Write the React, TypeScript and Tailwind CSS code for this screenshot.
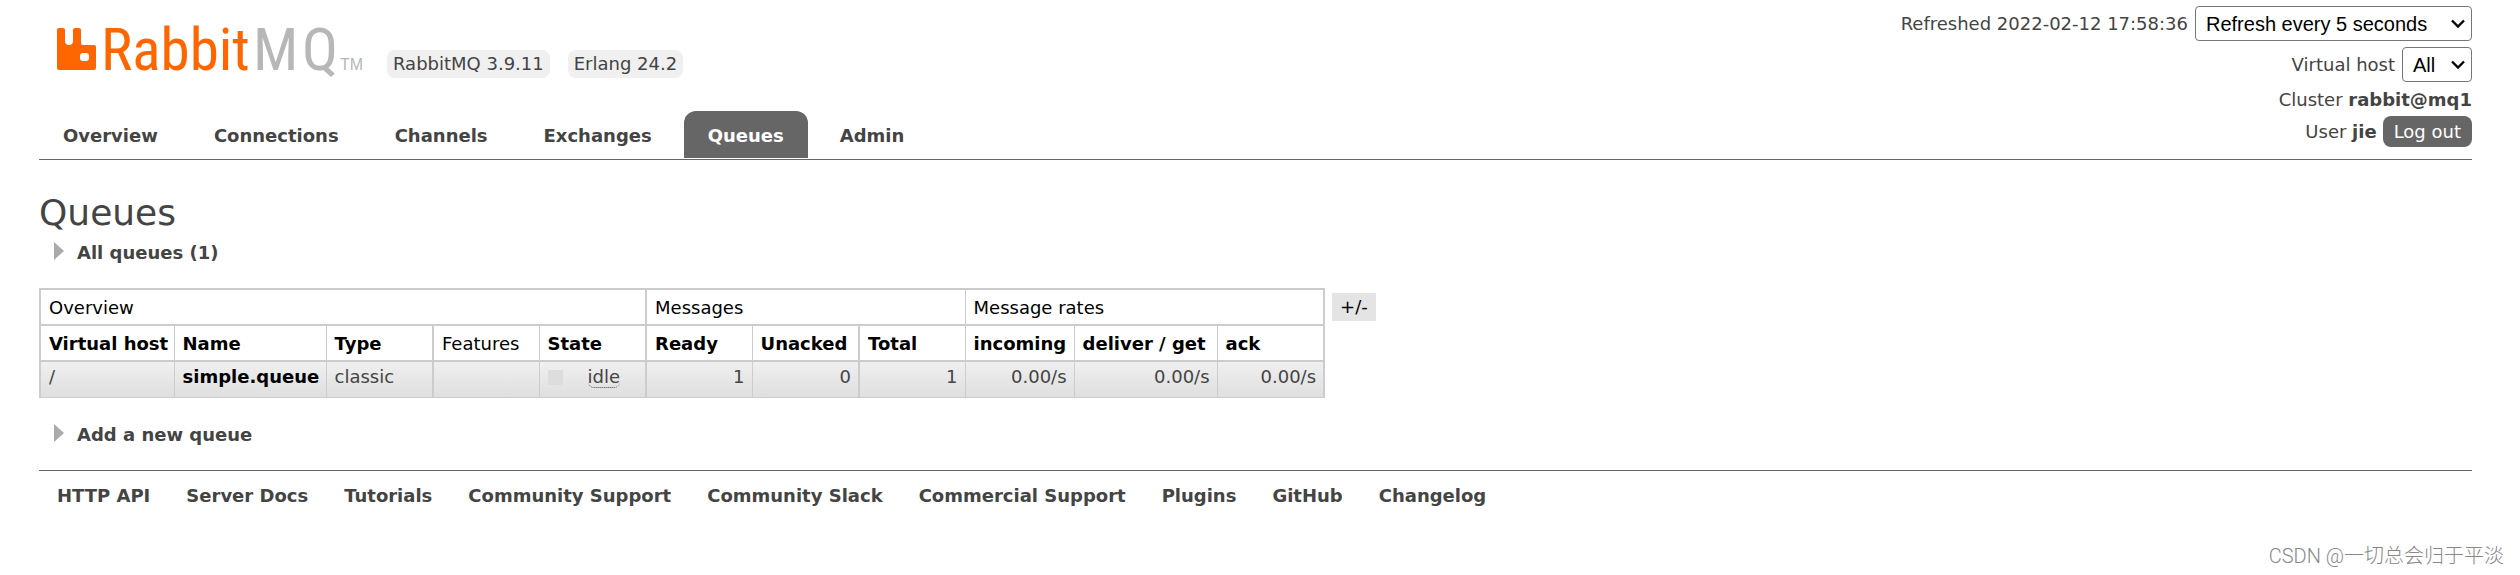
import { useState, type ReactNode } from 'react';
import clsx from 'clsx';

interface Column {
  label: string;
  width: string;
  edge: string;
  sortable?: boolean;
  numeric?: boolean;
}

const TABS = ['Overview', 'Connections', 'Channels', 'Exchanges', 'Queues', 'Admin'];

const COLUMNS: Column[] = [
  { label: 'Virtual host', width: 'w-[134px]', edge: 'border-l-2', sortable: true },
  { label: 'Name', width: 'w-[152px]', edge: 'border-l', sortable: true },
  { label: 'Type', width: 'w-[107px]', edge: 'border-l', sortable: true },
  { label: 'Features', width: 'w-[106px]', edge: 'border-l-2' },
  { label: 'State', width: 'w-[107px]', edge: 'border-l', sortable: true },
  { label: 'Ready', width: 'w-[106px]', edge: 'border-l-2', sortable: true, numeric: true },
  { label: 'Unacked', width: 'w-[107px]', edge: 'border-l', sortable: true, numeric: true },
  { label: 'Total', width: 'w-[106px]', edge: 'border-l-2', sortable: true, numeric: true },
  { label: 'incoming', width: 'w-[109px]', edge: 'border-l', sortable: true, numeric: true },
  { label: 'deliver / get', width: 'w-[143px]', edge: 'border-l', sortable: true, numeric: true },
  { label: 'ack', width: 'w-[107px]', edge: 'border-l border-r-2', sortable: true, numeric: true },
];

const FOOTER_LINKS = [
  'HTTP API',
  'Server Docs',
  'Tutorials',
  'Community Support',
  'Community Slack',
  'Commercial Support',
  'Plugins',
  'GitHub',
  'Changelog',
];

function Logo() {
  return (
    <svg width="310" height="84" viewBox="0 0 310 84" role="img" aria-label="RabbitMQ">
      <path
        fill="#ff6600"
        fillRule="evenodd"
        d="M2 22h4q2 0 2 2v11q0 4 4 4q4 0 4-4V24q0-2 2-2h4q2 0 2 2v13q0 2 2 2h11q2 0 2 2v21q0 2-2 2H2q-2 0-2-2V24q0-2 2-2zM26 47q-3 0-3 3v2q0 3 3 3h3q3 0 3-3v-2q0-3-3-3z"
      />
      <g fontFamily="'Roboto Condensed', 'Liberation Sans Narrow', 'Liberation Sans', sans-serif" fontSize="59">
        <text x="44" y="64" fill="#ff6600">Rabbit</text>
        <text x="196" y="64" fill="#b7b7b7" fontSize="60">
          M<tspan x="245">Q</tspan>
        </text>
      </g>
      <text x="283" y="64" fill="#b7b7b7" fontFamily="'Liberation Sans', sans-serif" fontSize="16">TM</text>
    </svg>
  );
}

function Select({ id, value, onChange, options, width }: {
  id: string;
  value: string;
  onChange: (v: string) => void;
  options: string[];
  width: string;
}) {
  return (
    <span className={clsx('relative inline-flex', width)}>
      <select
        id={id}
        value={value}
        onChange={(e) => onChange(e.target.value)}
        className="h-[35px] w-full appearance-none rounded-[4px] border border-[#767676] bg-white pl-[10px] font-['Liberation_Sans',sans-serif] text-[20px] leading-6 text-black"
      >
        {options.map((o) => <option key={o}>{o}</option>)}
      </select>
      <svg className="pointer-events-none absolute right-[7px] top-[13px]" width="14" height="9" viewBox="0 0 14 9" fill="none">
        <path d="M1 1.5l6 6 6-6" stroke="#000" strokeWidth="2.4" />
      </svg>
    </span>
  );
}

function Section({ children }: { children: ReactNode }) {
  return (
    <h2>
      <button type="button" className="flex items-center gap-[13px] pl-[15px] font-bold leading-6">
        <svg width="10" height="18" viewBox="0 0 10 18" className="mb-1">
          <path d="M0 0l10 9-10 9z" fill="#aaa" />
        </svg>
        {children}
      </button>
    </h2>
  );
}

export default function App() {
  const [tab, setTab] = useState('Queues');
  const [interval, setRefreshInterval] = useState('Refresh every 5 seconds');
  const [vhost, setVhost] = useState('All');

  const cells: ReactNode[] = [
    '/',
    <a href="#simple.queue" className="font-bold text-black">simple.queue</a>,
    'classic',
    '',
    <span className="flex items-center gap-[25px]">
      <span className="size-[15px] bg-[#ddd]" />
      <span className="rounded-[6px] border-b border-dotted border-[#444] leading-5">idle</span>
    </span>,
    '1',
    '0',
    '1',
    '0.00/s',
    '0.00/s',
    '0.00/s',
  ];

  return (
    <div className="relative bg-white pb-[66px] font-[Verdana,'DejaVu_Sans',sans-serif] text-[18px] leading-6 text-[#444]">
      <header className="ml-[39px] mr-12 flex items-stretch justify-between border-b border-[#666] pb-px">
        <div className="flex flex-col justify-between">
          <div className="flex items-start pl-[18px] pt-[6px]">
            <a href="#/"><Logo /></a>
            <ul className="ml-5 mt-11 flex gap-[18px]">
              <li className="rounded-[8px] bg-[#f0f0f0] px-[6px] py-[2px]">RabbitMQ 3.9.11</li>
              <li className="rounded-[8px] bg-[#f0f0f0] px-[6px] py-[2px]">Erlang 24.2</li>
            </ul>
          </div>
          <nav className="flex gap-2">
            {TABS.map((t) => (
              <a
                key={t}
                href={`#/${t.toLowerCase()}`}
                onClick={() => setTab(t)}
                className={clsx('rounded-t-[12px] px-6 pb-[10px] pt-[13px] font-bold', t === tab && 'bg-[#666] text-white')}
              >
                {t}
              </a>
            ))}
          </nav>
        </div>

        <ul className="flex flex-col items-end pt-[6px]">
          <li className="mb-[6px] flex items-center gap-[7px]">
            <label htmlFor="refresh">Refreshed 2022-02-12 17:58:36</label>
            <Select
              id="refresh"
              width="w-[277px]"
              value={interval}
              onChange={setRefreshInterval}
              options={['Refresh every 5 seconds', 'Refresh every 10 seconds', 'Refresh every 30 seconds', 'Do not refresh']}
            />
          </li>
          <li className="mb-[6px] flex items-center gap-[7px]">
            <label htmlFor="vhost">Virtual host</label>
            <Select id="vhost" width="w-[70px]" value={vhost} onChange={setVhost} options={['All', '/']} />
          </li>
          <li className="mb-1">Cluster <b>rabbit@mq1</b></li>
          <li className="mb-[11px] flex items-center gap-[6px]">
            <span>User <b>jie</b></span>
            <button type="button" className="h-[31px] rounded-[8px] bg-[#666] px-[11px] text-white">Log out</button>
          </li>
        </ul>
      </header>

      <main className="pl-[39px] pr-12 pt-[31px]">
        <h1 className="text-[36px] leading-[44px]">Queues</h1>
        <div className="mt-[6px]">
          <Section>All queues (1)</Section>
        </div>

        <div className="mt-[23px] flex items-start gap-[7px]">
          <table className="w-[1285px] table-fixed border-collapse text-left">
            <colgroup>
              {COLUMNS.map((c) => <col key={c.label} className={c.width} />)}
            </colgroup>
            <thead className="text-black">
              <tr className="h-9">
                <th colSpan={5} className="border-2 border-[#ccc] pb-0 pl-2 pr-[7px] pt-[2px] font-normal">Overview</th>
                <th colSpan={3} className="border-y-2 border-[#ccc] pb-0 pl-2 pr-[7px] pt-[2px] font-normal">Messages</th>
                <th colSpan={3} className="border-y-2 border-l border-r-2 border-[#ccc] pb-0 pl-2 pr-[7px] pt-[2px] font-normal">Message rates</th>
              </tr>
              <tr className="h-9">
                {COLUMNS.map((c) => (
                  <th
                    key={c.label}
                    className={clsx('whitespace-nowrap border-b-2 border-[#ccc] pb-0 pl-2 pr-[7px] pt-[2px]', c.edge, c.sortable ? 'font-bold' : 'font-normal')}
                  >
                    {c.label}
                  </th>
                ))}
              </tr>
            </thead>
            <tbody>
              <tr className="h-9 bg-linear-to-b from-[#f0f0f0] to-[#dfdfdf]">
                {COLUMNS.map((c, i) => (
                  <td
                    key={c.label}
                    className={clsx('whitespace-nowrap border-b border-[#ccc] pb-1 pl-2 pr-[7px] pt-0', c.edge, c.numeric && 'text-right')}
                  >
                    {cells[i]}
                  </td>
                ))}
              </tr>
            </tbody>
          </table>
          <button type="button" className="mt-[5px] bg-[#e4e4e4] px-2 py-[2px] text-black">+/-</button>
        </div>

        <div className="mt-[25px]">
          <Section>Add a new queue</Section>
        </div>
      </main>

      <footer className="ml-[39px] mr-12 mt-[23px] border-t border-[#666] pl-[18px] pt-[13px]">
        <ul className="flex gap-9 font-bold">
          {FOOTER_LINKS.map((l) => (
            <li key={l}><a href={`#${l}`}>{l}</a></li>
          ))}
        </ul>
      </footer>

      <p className="absolute bottom-[6px] right-4 font-[Roboto,'Noto_Sans_CJK_SC',sans-serif] text-[20px] font-light leading-6 text-[#888]">
        CSDN @一切总会归于平淡
      </p>
    </div>
  );
}
